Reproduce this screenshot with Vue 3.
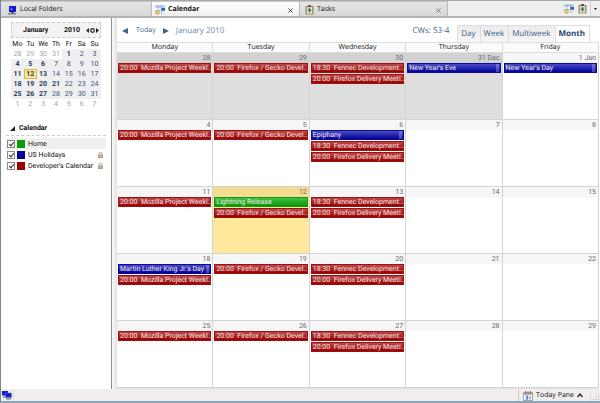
<script setup>
import { ref } from 'vue'

const weekdays = ['Mo', 'Tu', 'We', 'Th', 'Fr', 'Sa', 'Su']
const miniWeeks = [
  [28, 29, 30, 31, 1, 2, 3],
  [4, 5, 6, 7, 8, 9, 10],
  [11, 12, 13, 14, 15, 16, 17],
  [18, 19, 20, 21, 22, 23, 24],
  [25, 26, 27, 28, 29, 30, 31],
  [1, 2, 3, 4, 5, 6, 7],
]
const busyDays = [1, 4, 5, 6, 11, 12, 13, 18, 19, 20, 21, 25, 26, 27]

function miniClass(day, week) {
  const other = (week === 0 && day > 7) || week === 5
  return {
    other,
    inside: !other,
    busy: !other && busyDays.includes(day),
    today: !other && day === 12,
  }
}

const calendars = ref([
  { id: 'home', name: 'Home', color: 'green', locked: false, shown: true },
  { id: 'us', name: 'US Holidays', color: 'blue', locked: true, shown: true },
  { id: 'dev', name: "Developer's Calendar", color: 'red', locked: true, shown: true },
])

const views = ['Day', 'Week', 'Multiweek', 'Month']
const view = ref('Month')

const mozilla = { text: '20:00  Mozilla Project Weekl...', color: 'red' }
const gecko = { text: '20:00  Firefox / Gecko Devel...', color: 'red' }
const fennec = { text: '18:30  Fennec Development...', color: 'red' }
const delivery = { text: '20:00  Firefox Delivery Meeti...', color: 'red' }
const holiday = (text) => ({ text, color: 'blue', tag: true })

const columns = ['Monday', 'Tuesday', 'Wednesday', 'Thursday', 'Friday']
const weeks = [
  [
    { label: '28', off: true, events: [mozilla] },
    { label: '29', off: true, events: [gecko] },
    { label: '30', off: true, events: [fennec, delivery] },
    { label: '31 Dec', off: true, events: [holiday("New Year's Eve")] },
    { label: '1 Jan', events: [holiday("New Year's Day")] },
  ],
  [
    { label: '4', events: [mozilla] },
    { label: '5', events: [gecko] },
    { label: '6', events: [holiday('Epiphany'), fennec, delivery] },
    { label: '7', events: [] },
    { label: '8', events: [] },
  ],
  [
    { label: '11', events: [mozilla] },
    { label: '12', today: true, events: [{ text: 'Lightning Release', color: 'green' }, gecko] },
    { label: '13', events: [fennec, delivery] },
    { label: '14', events: [] },
    { label: '15', events: [] },
  ],
  [
    { label: '18', events: [holiday("Martin Luther King Jr.'s Day"), mozilla] },
    { label: '19', events: [gecko] },
    { label: '20', events: [fennec, delivery] },
    { label: '21', events: [] },
    { label: '22', events: [] },
  ],
  [
    { label: '25', events: [mozilla] },
    { label: '26', events: [gecko] },
    { label: '27', events: [fennec, delivery] },
    { label: '28', events: [] },
    { label: '29', events: [] },
  ],
]
</script>

<template>
  <div class="window">
    <svg class="defs" width="0" height="0" aria-hidden="true">
      <symbol id="ic-cal" viewBox="0 0 11 10">
        <rect x="0.5" y="0.5" width="9.5" height="8.5" fill="#dfe9f6" />
        <path d="M0 .5h10v2H0z" fill="#a9c4e6" />
        <path d="M1 3h2v2H1zM4 3h2v2H4zM4 6h2v2H4z" fill="#fff" />
        <path d="M6 3h4v3H6z" fill="#2f5fae" />
        <path d="M3 0v9M6.500 0v9M0 5.500h10" stroke="#7fa3d2" stroke-width=".6" />
        <circle cx="2.500" cy="7.500" r="2" fill="#f3c66a" stroke="#b98a3a" stroke-width=".5" />
      </symbol>
      <symbol id="ic-task" viewBox="0 0 9 10">
        <rect x=".5" y="1" width="8" height="8.500" rx=".5" fill="#a9805c" />
        <rect x="1.800" y="2.200" width="5.400" height="6.500" fill="#dfe6df" />
        <rect x="3" y="0" width="3" height="2" fill="#555b60" />
        <path d="M4.500 3v4.500M2.800 5.200h3.400" fill="none" stroke="#23854a" stroke-width="1.400" />
      </symbol>
    </svg>

    <nav class="tabs" aria-label="Tabs">
      <button class="tab folders" type="button">
        <svg width="9" height="9" viewBox="0 0 9 9" aria-hidden="true">
          <path d="M1 0h7v6H1z" fill="#1717c4" />
          <path d="M2 1l3 2-2 2z" fill="#5d7bff" />
          <path d="M0 7h8v1.500H0z" fill="#77808f" />
          <path d="M3 6h3v1H3z" fill="#454a66" />
        </svg>
        <span>Local Folders</span>
      </button>
      <button class="tab current" type="button">
        <svg width="11" height="10" aria-hidden="true"><use href="#ic-cal" /></svg>
        <span>Calendar</span>
        <svg class="close" width="5" height="5" viewBox="0 0 5 5" aria-hidden="true"><path d="M.5.5l4 4M4.500.5l-4 4" stroke="#3c4048" /></svg>
      </button>
      <button class="tab tasks" type="button">
        <svg width="9" height="10" aria-hidden="true"><use href="#ic-task" /></svg>
        <span>Tasks</span>
        <svg class="close" width="5" height="5" viewBox="0 0 5 5" aria-hidden="true"><path d="M.5.5l4 4M4.500.5l-4 4" stroke="#777" /></svg>
      </button>
      <div class="tab-tools">
        <button type="button" aria-label="Calendar"><svg width="11" height="10" aria-hidden="true"><use href="#ic-cal" /></svg></button>
        <button type="button" aria-label="Tasks"><svg width="9" height="10" aria-hidden="true"><use href="#ic-task" /></svg></button>
        <button class="more" type="button" aria-label="All tabs"><svg width="3" height="2" viewBox="0 0 3 2" aria-hidden="true"><path d="M0 0h3L1.500 2z" fill="#222" /></svg></button>
      </div>
    </nav>

    <div class="body">
      <aside class="side">
        <section class="mini">
          <header class="mini-head">
            <span class="mini-month">January</span>
            <span class="mini-year">2010</span>
            <span class="mini-nav">
              <button type="button" aria-label="Previous month"><svg width="3" height="5" viewBox="0 0 3 5" aria-hidden="true"><path d="M3 0v5L0 2.500z" fill="#222" /></svg></button>
              <button type="button" aria-label="Today"><svg width="5" height="5" viewBox="0 0 5 5" aria-hidden="true"><circle cx="2.500" cy="2.500" r="1.800" fill="none" stroke="#222" stroke-width="1.200" /></svg></button>
              <button type="button" aria-label="Next month"><svg width="3" height="5" viewBox="0 0 3 5" aria-hidden="true"><path d="M0 0v5l3-2.500z" fill="#222" /></svg></button>
            </span>
          </header>
          <table class="mini-grid">
            <thead>
              <tr><th v-for="d in weekdays" :key="d" scope="col">{{ d }}</th></tr>
            </thead>
            <tbody>
              <tr v-for="(w, i) in miniWeeks" :key="i">
                <td v-for="(d, j) in w" :key="j" :class="miniClass(d, i)">{{ d }}</td>
              </tr>
            </tbody>
          </table>
        </section>

        <section class="lists">
          <h2>
            <svg width="5" height="5" viewBox="0 0 5 5" aria-hidden="true"><path d="M5 0v5H0z" fill="#222" /></svg>
            Calendar
          </h2>
          <ul>
            <li v-for="c in calendars" :key="c.id" :class="{ selected: c.id === 'home' }">
              <input :id="c.id" v-model="c.shown" type="checkbox" />
              <label :for="c.id"><span class="swatch" :class="c.color"></span>{{ c.name }}</label>
              <svg v-if="c.locked" class="lock" width="5" height="6" viewBox="0 0 5 6" aria-hidden="true">
                <path d="M1 3V1.500C1 .2 4 .2 4 1.500V3" fill="none" stroke="#8c8172" stroke-width=".8" />
                <path d="M0 2.700h5V6H0z" fill="#b59b6e" />
                <path d="M0 4.200h5" stroke="#e2cfa5" stroke-width=".6" />
              </svg>
            </li>
          </ul>
        </section>
      </aside>
      <div class="splitter"></div>

      <main class="main">
        <div class="bar">
          <button class="arrow" type="button" aria-label="Previous"><svg width="6" height="6" viewBox="0 0 6 6" aria-hidden="true"><path d="M6 0v6L0 3z" fill="#3f6690" /></svg></button>
          <button class="go-today" type="button">Today</button>
          <button class="arrow" type="button" aria-label="Next"><svg width="6" height="6" viewBox="0 0 6 6" aria-hidden="true"><path d="M0 0v6l6-3z" fill="#3f6690" /></svg></button>
          <span class="title">January 2010</span>
          <span class="weeks">CWs: 53-4</span>
          <div class="views">
            <button v-for="v in views" :key="v" type="button" :class="{ active: v === view }" @click="view = v">{{ v }}</button>
          </div>
        </div>

        <table class="month">
          <thead>
            <tr><th v-for="c in columns" :key="c" scope="col">{{ c }}</th></tr>
          </thead>
          <tbody>
            <tr v-for="(w, i) in weeks" :key="i">
              <td v-for="d in w" :key="d.label" :class="{ off: d.off, today: d.today }">
                <div class="date">{{ d.label }}</div>
                <div v-for="e in d.events" :key="e.text" class="event" :class="e.color">
                  <span>{{ e.text }}</span><i v-if="e.tag"></i>
                </div>
              </td>
            </tr>
          </tbody>
        </table>
      </main>
    </div>

    <footer class="status">
      <span class="online">
        <svg width="10" height="9" viewBox="0 0 10 9" aria-hidden="true">
          <path d="M0 0h6v4.500H0zM3.500 2h6v4.500h-6z" fill="#1420cf" />
          <path d="M3.500 2h6v4.500h-6z" fill="none" stroke="#5d73c9" stroke-width=".5" />
          <path d="M1 5.500h2.500v1.200H1zM4 7.300h5v1.200H4z" fill="#77776f" />
        </svg>
      </span>
      <button class="pane" type="button">
        <svg width="10" height="10" viewBox="0 0 10 10" aria-hidden="true">
          <path d="M.5 1.500h9v8h-9z" fill="#fff" stroke="#8a8f99" stroke-width=".8" />
          <path d="M1 2h8v2H1z" fill="#d3a28c" />
          <path d="M2.500 0v2.500M5 0v2.500M7.500 0v2.500" stroke="#666" stroke-width=".8" />
          <path d="M2.500 5h2.200v1.500H3M4.700 6.500V8.200H2.500M7 5v3.500" fill="none" stroke="#2b64c0" stroke-width=".9" />
        </svg>
        <span>Today Pane</span>
        <svg width="6" height="5" viewBox="0 0 6 5" aria-hidden="true"><path d="M.5 4L3 1l2.500 3" fill="none" stroke="#222" stroke-width="1.300" /></svg>
      </button>
      <svg class="grip" width="8" height="8" viewBox="0 0 8 8" aria-hidden="true"><path d="M6 1h1v1H6zM6 3.500h1v1H6zM6 6h1v1H6zM3.500 3.500h1v1h-1zM3.500 6h1v1h-1zM1 6h1v1H1z" fill="#b3afae" /></svg>
    </footer>
  </div>
</template>

<style>
body {
  margin: 0;
}
</style>

<style scoped>
.window {
  display: flex;
  flex-direction: column;
  box-sizing: border-box;
  min-height: 100vh;
  border-left: 1px solid #7089a5;
  border-bottom: 2px solid #8fa6b8;
  background: #fff;
  color: #111;
  font-family: Roboto, "Open Sans", sans-serif;
  font-size: 7px;
  line-height: 10px;
  text-rendering: geometricPrecision;
}
.tabs,
.bar,
.status {
  font-family: "Open Sans", "Noto Sans", sans-serif;
}
.defs {
  position: absolute;
}
button {
  display: flex;
  align-items: center;
  margin: 0;
  padding: 0;
  border: 0;
  background: none;
  color: inherit;
  font: inherit;
  text-rendering: inherit;
}
svg {
  flex: none;
}

.tabs {
  display: flex;
  height: 15px;
  border-top: 1px solid #aaa;
  border-bottom: 2px solid #b2b2b2;
  background: #efefef;
}
.tab {
  gap: 3px;
  box-sizing: border-box;
  padding: 2px 6px 0 7px;
  border-top: 1px solid #c8c8c8;
  border-right: 1px solid #b8b8b8;
  background: linear-gradient(#e4e4e4, #d8d8d8);
}
.tab.folders {
  flex: 0 1 151px;
}
.tab.current {
  flex: 0 1 148px;
  gap: 2px;
  padding-left: 3px;
  background: linear-gradient(#fff, #efefef);
  font-weight: 700;
}
.tab.tasks {
  flex: 0 1 148px;
  padding-left: 5px;
}
.close {
  margin-left: auto;
}
.tab-tools {
  display: flex;
  gap: 3px;
  margin-left: auto;
}
.more {
  justify-content: center;
  width: 10px;
  border-left: 1px solid #d2d2d2;
}

.body {
  display: flex;
  flex: 1;
}
.side {
  box-sizing: border-box;
  flex: 0 0 111px;
  min-width: 0;
  padding: 4px 5px;
  border-right: 1px solid #8f8f8f;
}
.splitter {
  flex: 0 0 5px;
  background: linear-gradient(90deg, #fafafa, #e2e2e2);
}
.mini {
  padding: 0 5px;
}
.mini-head {
  display: flex;
  align-items: center;
  height: 14px;
  border: 1px dashed #ccc;
  background: #f3f3f3;
  font-weight: 700;
}
.mini-month {
  margin-left: 11px;
}
.mini-year {
  margin-left: auto;
}
.mini-nav {
  display: flex;
  gap: 1px;
  margin: 0 1px 0 6px;
}
.mini-grid {
  width: 100%;
  border-collapse: collapse;
  table-layout: fixed;
}
.mini-grid th,
.mini-grid td {
  padding: 0;
  height: 10px;
  text-align: center;
}
.mini-grid th {
  height: 11px;
  font-weight: 400;
}
.mini-grid .other {
  color: #a3a3a3;
}
.mini-grid .inside {
  background: #efefef;
  color: #33557f;
}
.mini-grid .busy {
  color: #1d3c66;
  font-weight: 700;
}
.mini-grid .today {
  background: #fde58f;
  outline: 1px solid #d6b95e;
  outline-offset: -1px;
}

.lists h2 {
  display: flex;
  align-items: center;
  gap: 4px;
  margin: 14px 0 2px;
  padding: 0 4px 2px;
  border-bottom: 1px dashed #ccc;
  font-size: 7px;
  font-weight: 700;
}
.lists ul {
  margin: 0;
  padding: 0;
  list-style: none;
}
.lists li {
  display: flex;
  align-items: center;
  gap: 2px;
  height: 11px;
}
.lists li.selected {
  background: #efefef;
}
.lists input {
  appearance: none;
  box-sizing: border-box;
  flex: none;
  width: 8px;
  height: 8px;
  margin: 0 0 0 1px;
  border: 1px solid #8b8b8b;
  background: #f6f6f6;
}
.lists input:checked::before {
  content: "";
  display: block;
  box-sizing: border-box;
  width: 3px;
  height: 5px;
  margin-left: 2px;
  border: solid #333;
  border-width: 0 1px 1px 0;
  transform: rotate(40deg);
}
.lists label {
  display: flex;
  align-items: center;
  gap: 3px;
  white-space: nowrap;
}
.swatch {
  width: 8px;
  height: 8px;
}
.swatch.green {
  background: #0a9a0a;
}
.swatch.blue {
  background: #00009c;
}
.swatch.red {
  background: #990000;
}
.lock {
  margin: 0 3px 0 auto;
}

.main {
  display: flex;
  flex: 1;
  flex-direction: column;
  min-width: 0;
  padding-right: 1px;
  background: #fff;
}
.bar {
  display: flex;
  align-items: center;
  box-sizing: border-box;
  height: 24px;
  padding: 2px 9px 0 5px;
  color: #3d5f88;
}
.go-today {
  margin: 0 7px 0 8px;
}
.title {
  margin-left: 7px;
  color: #6e87a3;
  font-size: 8px;
}
.weeks {
  margin-left: auto;
  font-size: 8px;
}
.views {
  display: flex;
  align-self: flex-end;
  margin-left: 8px;
}
.views button {
  height: 17px;
  padding: 0 4px 0 3px;
  border: 1px solid #ddd;
  border-bottom: 0;
  border-left: 0;
  background: linear-gradient(#ececec, #f6f6f6);
  font-size: 8px;
}
.views button:first-child {
  border-left: 1px solid #ddd;
}
.views .active {
  background: #fff;
  color: #27466f;
  font-weight: 700;
}

.month {
  flex: 1;
  width: 100%;
  border-bottom: 1px solid #e2e2e2;
  border-spacing: 0;
  table-layout: fixed;
}
.month th {
  box-sizing: border-box;
  height: 11px;
  padding: 0;
  border: solid #ddd;
  border-width: 1px 1px 1px 0;
  background: #fbfbfb;
  font-family: "Open Sans", "Noto Sans", sans-serif;
  font-weight: 400;
  line-height: 9px;
}
.month tbody tr {
  height: 20%;
}
.month td {
  padding: 0;
  border: solid #d4d4d4;
  border-width: 0 1px 1px 0;
  vertical-align: top;
}
.month .date {
  box-sizing: border-box;
  height: 10px;
  padding-right: 2px;
  background: #f6f6f6;
  color: #6b6b6b;
  line-height: 10px;
  text-align: right;
}
.month .off {
  background: #dedede;
}
.month .off .date {
  background: #d2d2d2;
}
.month .today {
  background: #ffe79c;
}
.month .today .date {
  background: #f6dc90;
}
.event {
  display: flex;
  justify-content: space-between;
  box-sizing: border-box;
  height: 10px;
  margin: 0 1px 1px;
  padding: 0 1px;
  border: 1px solid;
  color: #f6eaea;
  line-height: 8px;
  white-space: pre;
}
.event i {
  width: 3px;
  background: rgba(255, 255, 255, 0.25);
}
.event.red {
  border-color: #a01010;
  background: linear-gradient(#bb4a4a, #990000);
}
.event.blue {
  border-color: #0a0a9c;
  background: linear-gradient(#4a4ac4, #000098);
}
.event.green {
  border-color: #109a10;
  background: linear-gradient(#4cbc4c, #009a00);
}

.status {
  display: flex;
  height: 12px;
  background: #f0edec;
}
.online {
  display: flex;
  align-items: center;
  padding: 0 1px;
  border-right: 1px solid #dcd8d6;
}
.pane {
  gap: 3px;
  margin-left: auto;
  padding: 1px 5px 0 4px;
  border-left: 1px solid #cfcbc9;
}
.grip {
  align-self: flex-end;
  margin-left: 2px;
  padding-left: 1px;
  border-left: 1px solid #dcd8d6;
}
</style>
